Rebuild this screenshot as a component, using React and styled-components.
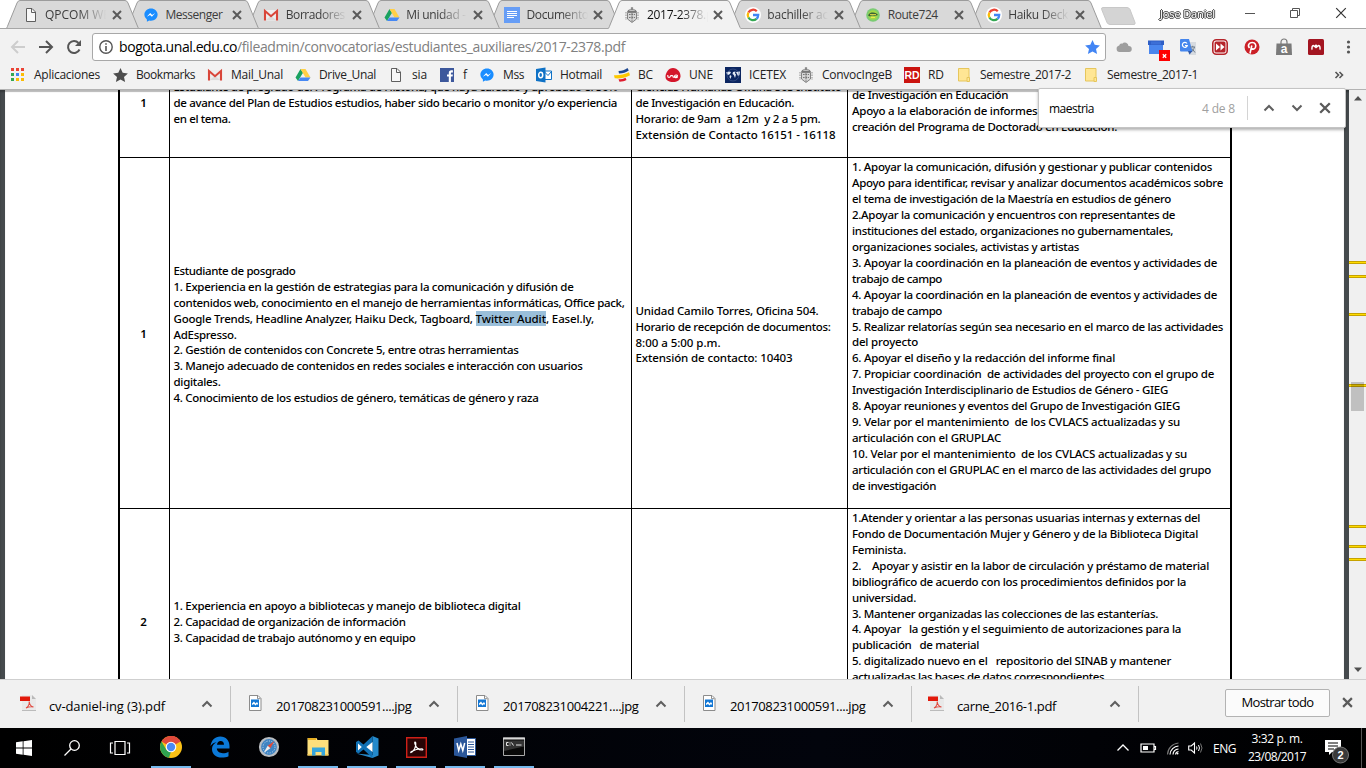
import React, { useLayoutEffect, useRef, useState } from "react";
import styled, { createGlobalStyle, css } from "styled-components";

const UI = `"Open Sans", "Noto Sans", sans-serif`;

const GlobalStyle = createGlobalStyle`
  * { box-sizing: border-box; }
  html, body { margin: 0; padding: 0; height: 100%; overflow: hidden; }
  body { font-family: ${UI}; font-size: 12px; color: #000; }
  svg { display: block; flex: none; overflow: visible; }
`;

/* ---------- text tracked to a measured width ---------- */

const FitText = styled.span`
  display: inline-block;
  white-space: pre;
  flex: none;
`;

function Fit({ w, children }) {
  const ref = useRef(null);
  const [tracking, setTracking] = useState(0);
  useLayoutEffect(() => {
    const el = ref.current;
    const natural = el.getBoundingClientRect().width;
    setTracking((w - natural) / el.textContent.length);
  }, [w]);
  return (
    <FitText ref={ref} style={{ letterSpacing: `${tracking}px` }}>
      {children}
    </FitText>
  );
}

/* ---------- icons ---------- */

const Icon = ({ size = 16, box = 16, children, ...rest }) => (
  <svg width={size} height={size} viewBox={`0 0 ${box} ${box}`} fill="none" {...rest}>
    {children}
  </svg>
);

const PageIcon = () => (
  <Icon>
    <path d="M3.500 1.500h5.500l3.500 3.500v9.500h-9z" fill="#f8f8f8" stroke="#5f5f5f" />
    <path d="M8.500 1.500v4h4" stroke="#5f5f5f" />
  </Icon>
);
const MessengerIcon = () => (
  <Icon>
    <path d="M8 1.500C4.300 1.500 1.400 4.200 1.400 7.600c0 2 1 3.700 2.500 4.800v2.400l2.300-1.300c.6.2 1.200.3 1.800.3 3.700 0 6.600-2.700 6.600-6.200S11.700 1.500 8 1.500z" fill="#1a8dff" />
    <path d="M3.800 9.700 7.200 6l1.900 1.900L12.200 6 8.900 9.700 7 7.900z" fill="#fff" />
  </Icon>
);
const GmailIcon = () => (
  <Icon>
    <path d="M1 3h14v10.500H1z" fill="#eee" />
    <path d="m3 13 5-4.500 5 4.500z" fill="#dcdcdc" />
    <path d="M2 13.500V4l6 5.200L14 4v9.500" stroke="#d9463a" strokeWidth="2.100" />
  </Icon>
);
const DriveIcon = () => (
  <Icon>
    <path d="M5.500 2 .5 10.500 3 14l5-8.300z" fill="#1aa260" />
    <path d="M5.500 2h5l5 8.500h-5z" fill="#ffcf48" />
    <path d="M5.400 10.500h10.100L13 14H3z" fill="#4688f4" />
  </Icon>
);
const DocsIcon = () => (
  <Icon>
    <path d="M0 0h16v16H0z" fill="#669df6" />
    <path d="M3 4.500h10M3 6.500h10M3 8.500h10M3 10.500h7" stroke="#fff" />
  </Icon>
);
const CrestIcon = () => (
  <Icon>
    <path d="M8 0v2.500M6.800 1.200h2.400" stroke="#777" />
    <path d="M3.500 4.500C4 2 12 2 12.500 4.500z" fill="#d0d0d0" stroke="#777" />
    <path d="M3.500 5.500h9v6.500L8 15.500l-4.500-3.500z" fill="#d6d6d6" stroke="#777" strokeWidth=".9" />
    <path d="M2 5v8M14 5v8" stroke="#8b8b8b" strokeDasharray="1.500 1" />
    <path d="M5 7.500h6M5 10.500h6M8 6v9" stroke="#777" strokeDasharray="1.600 .8" />
  </Icon>
);
const GoogleIcon = () => (
  <Icon>
    <circle cx="8" cy="8" r="8" fill="#fff" />
    <g strokeWidth="2.300">
      <path d="M11.800 4.300A5.200 5.200 0 0 0 3.400 5.600" stroke="#ea4335" />
      <path d="M3.400 5.600a5.200 5.200 0 0 0 0 4.900" stroke="#fbbc05" />
      <path d="M3.400 10.500a5.200 5.200 0 0 0 8.100 1.300" stroke="#34a853" />
      <path d="M8 8h5.200a5.200 5.200 0 0 1-1.700 3.800" stroke="#4285f4" />
    </g>
  </Icon>
);
const RouteIcon = () => (
  <Icon>
    <circle cx="8" cy="8" r="6.800" fill="#7ccc74" />
    <circle cx="8" cy="8" r="4.800" fill="#a2d947" />
    <path d="M3 8.500C4 6 6 5.500 8 5.500c2.500 0 4 1 5 2.500l-3 1-3-.5L5 9.500z" fill="#3b6338" />
    <path d="M5 7.700h6M6 10.500h4" stroke="#f2e84b" />
  </Icon>
);
const AppsIcon = () => (
  <Icon>
    {["#ea4335", "#ea4335", "#ea4335", "#34a853", "#4285f4", "#fbbc05", "#34a853", "#fbbc05", "#fbbc05"].map((c, i) => (
      <rect key={i} x={1 + (i % 3) * 5} y={1 + Math.floor(i / 3) * 5} width="3" height="3" fill={c} />
    ))}
  </Icon>
);
const StarIcon = ({ color = "#4d4d4d", size }) => (
  <Icon size={size}>
    <path d="m8.500 1 2.200 4.800 5.200.6-3.900 3.600 1.100 5.100-4.600-2.600-4.600 2.600L5 10 1.100 6.400l5.200-.6z" fill={color} />
  </Icon>
);
const FacebookIcon = () => (
  <Icon>
    <path d="M1 1h14v14H1z" fill="#3d589c" />
    <path d="M9.800 15V9.500H8V7.400h1.800V6c0-1.900 1-2.700 2.600-2.700h1.500v2.100h-1c-.8 0-1 .4-1 1v1h2l-.3 2.100h-1.700V15z" fill="#fff" />
  </Icon>
);
const GlyphText = styled.text`
  font-family: "Liberation Sans", sans-serif;
  font-weight: 700;
  font-size: ${(p) => p.$size || 10}px;
  fill: ${(p) => p.$fill || "#fff"};
`;
const OutlookIcon = () => (
  <Icon>
    <path d="M8 4h7.500v8.500H8z" fill="#fff" stroke="#0f72c6" />
    <path d="m8.500 5 3.500 3.500 3.500-4" stroke="#0f72c6" />
    <path d="M0 2 9.500.5v15L0 14z" fill="#0f72c6" />
    <ellipse cx="4.700" cy="8" rx="2" ry="2.700" stroke="#fff" strokeWidth="1.500" />
  </Icon>
);
const BancolombiaIcon = () => (
  <Icon>
    <path d="M4.500 4C8 4 11 3 13.500 1l1.300 2.500C12 5.500 9 6.500 5 6.500z" fill="#1d4790" />
    <path d="M0 8.200c5 .3 10.500-.7 15-3l1 3C11 11 6 11.700.7 11.300z" fill="#fdc800" />
    <path d="M4.500 12.300c3 0 5-.5 7-1.500l1 2.300c-2 1-4 1.700-7 1.700z" fill="#df1c2e" />
  </Icon>
);
const UneIcon = () => (
  <Icon>
    <path d="M8 1c4.500 0 7.800 4.500 7.500 8.500-.3 3.800-3.500 5.500-7.500 5.500S.7 13.500.5 10C.3 6 3.500 1 8 1z" fill="#d4162b" />
    <path d="M2.800 8v1.200c0 1.500 2.500 1.500 2.500 0 0-1 2.700-1 2.700 0v.5c0 1 2.500.3 4.500-.5 0-1.700-3-1.500-3 .3 0 1.300 2 1.500 3.200.6" stroke="#fff" strokeWidth="1.100" />
  </Icon>
);
const IcetexIcon = () => (
  <Icon>
    <path d="M0 0h16v16H0z" fill="#0b2560" />
    <path d="m1 5.500 3-1 2 .5-1 2-2 1-1-1zM5 8l1.500 1-1 3L4.500 10zM8 5l2.500-.5L10 6.500l1 1-1 3.500-1.200-3L7.500 7zM11 5l4-.5L14.500 8l-1.500 1-1-2z" fill="#e3e9f4" />
    <circle cx="8" cy="8" r="6" stroke="#5870a3" strokeWidth=".5" />
  </Icon>
);
const RdIcon = () => (
  <Icon>
    <path d="M0 0h16v16H0z" fill="#cb1410" />
    <GlyphText x=".5" y="11.700" $size={10.500}>RD</GlyphText>
  </Icon>
);
const FolderIcon = () => (
  <Icon>
    <path d="M2.500 1.500h10.500V14H2.500z" fill="#ffe694" stroke="#e6c65c" />
    <path d="M11 10.500h2.500v4h-2.500z" fill="#ffe694" stroke="#e6c65c" />
  </Icon>
);
const PdfIcon = () => (
  <Icon>
    <path d="M2 0h10l4 4v12H2z" fill="#e9e9e9" />
    <path d="M12 0v4h4z" fill="#b9b9b9" />
    <path d="M2 15.500h14" stroke="#bbb" />
    <path d="M0 1.500h10V6H0z" fill="#e2190b" />
    <path d="M6 13c2-1 3.500-4 3.200-6.500C9.500 9.500 11 11.500 13.500 12c-3-.5-5.500 0-7.500 1" stroke="#e0483e" strokeWidth="1.100" />
  </Icon>
);
const JpgIcon = () => (
  <Icon>
    <path d="M2.500.5h8.500l3 3v12H2.500z" fill="#fff" stroke="#8c8c8c" />
    <path d="M10.500.7v3h3" stroke="#8c8c8c" />
    <path d="M4 4.500h8v7.500H4z" fill="#1377d4" />
    <path d="m5 8.500 2-2 1.500 2L10 7l1 1.500V10l-1-1-1.500 1.500L7 9l-2 1z" fill="#fff" />
  </Icon>
);
const Chevron = ({ down, color = "#5f5f5f", size = 12 }) => (
  <Icon size={size} box={12}>
    <path d={down ? "m1.500 3.500 4.500 4.500 4.500-4.500" : "M1.500 8.500 6 4l4.500 4.500"} stroke={color} strokeWidth="2" />
  </Icon>
);
const Cross = ({ size = 10, color = "#5a5a5a", weight = 2 }) => (
  <Icon size={size} box={10}>
    <path d="m1 1 8 8M9 1 1 9" stroke={color} strokeWidth={weight} />
  </Icon>
);

/* ---------- window shell ---------- */

const Window = styled.div`
  width: 1366px;
  height: 768px;
  display: flex;
  flex-direction: column;
  overflow: hidden;
  position: relative;
  background: #f2f2f2;
`;

const TabStrip = styled.div`
  height: 29px;
  padding-left: 6px;
  display: flex;
  background: #fff;
  border-bottom: 1px solid #a6a6a6;
  flex: none;
`;

const TabBox = styled.div`
  position: relative;
  z-index: ${(p) => p.$layer};
  width: 120.400px;
  height: 29px;
  display: flex;
  align-items: center;
  padding-left: 16.500px;
  flex: none;
  color: ${(p) => (p.$active ? "#111" : "#3c3c3c")};
`;

const TabShape = styled.svg`
  position: absolute;
  left: 0;
  top: 0;
`;

const TabLabel = styled.span`
  position: relative;
  width: 61px;
  margin-left: 6.500px;
  overflow: hidden;
  white-space: nowrap;
  line-height: 29px;
  ${(p) => p.$fade && css`mask-image: linear-gradient(90deg, #000 55%, transparent 100%);`}
`;

const Over = styled.span`
  position: relative;
  display: flex;
  margin-left: ${(p) => p.$gap || 0}px;
`;

const NewTab = styled.svg`
  margin: 7px 0 0 11px;
`;

const ProfileName = styled.span`
  margin-left: 25px;
  line-height: 27px;
  font-size: 11px;
  color: #fff;
  text-shadow: 1px 0 #444, -1px 0 #444, 0 1px #444, 0 -1px #444;
  will-change: transform;
`;

const WindowButtons = styled.div`
  display: flex;
  align-items: center;
  gap: 35px;
  height: 26px;
  margin-left: 30px;
`;

const TABS = [
  { icon: <PageIcon />, label: "QPCOM WE", w: 65, fade: true },
  { icon: <MessengerIcon />, label: "Messenger", w: 57 },
  { icon: <GmailIcon />, label: "Borradores", w: 59, fade: true },
  { icon: <DriveIcon />, label: "Mi unidad - G", w: 71, fade: true },
  { icon: <DocsIcon />, label: "Documento", w: 62, fade: true },
  { icon: <CrestIcon />, label: "2017-2378.p", w: 66, fade: true, active: true },
  { icon: <GoogleIcon />, label: "bachiller aca", w: 67, fade: true },
  { icon: <RouteIcon />, label: "Route724", w: 50 },
  { icon: <GoogleIcon />, label: "Haiku Deck", w: 60, fade: true },
];

function Tab({ tab, layer }) {
  return (
    <TabBox $layer={layer} $active={tab.active}>
      <TabShape width="133" height="29" viewBox="0 0 133 29">
        <path d="M0 29C1 28 1 27.500 2 25L11 3Q12 .5 14 .5H119Q121 .5 122 3L131 25Q132 28 133 29z" fill={tab.active ? "#f2f2f2" : "#d9d9d9"} />
        <path d="M0 28.500C1 28 1 27.500 2 25L11 3Q12 .5 14 .5H119Q121 .5 122 3L131 25Q132 28 133 28.500" fill="none" stroke="#9c9c9c" />
        {!tab.active && <path d="M0 28.500h133" stroke="#a6a6a6" />}
      </TabShape>
      <Over>{tab.icon}</Over>
      <TabLabel $fade={tab.fade}>
        <Fit w={tab.w}>{tab.label}</Fit>
      </TabLabel>
      <Over $gap={5.500}>
        <Cross />
      </Over>
    </TabBox>
  );
}

const Toolbar = styled.div`
  height: 36px;
  flex: none;
  display: flex;
  align-items: center;
`;

const NavButtons = styled.div`
  display: flex;
  gap: 12px;
  padding-left: 10px;
  width: 92px;
`;

const Omnibox = styled.div`
  width: 1014px;
  height: 28px;
  display: flex;
  align-items: center;
  gap: 6px;
  padding: 0 5px 0 6px;
  background: #fff;
  border: 1px solid #a8a8a8;
  border-radius: 3px;
  font-size: 14px;
`;

const Url = styled.div`
  display: flex;
  flex: 1;
  line-height: 24px;
`;
const UrlPath = styled.span`
  color: #808080;
`;

const Extensions = styled.div`
  display: flex;
  align-items: center;
  gap: 16px;
  margin-left: 10px;
`;

const BookmarkBar = styled.div`
  height: 25px;
  flex: none;
  display: flex;
  align-items: center;
  padding: 0 22px 5px 10px;
  gap: 12px;
  border-bottom: 1px solid #b3b3b3;
`;

const BookmarkItem = styled.div`
  display: flex;
  align-items: center;
  gap: 8px;
  line-height: 18px;
  color: #222;
`;

const MoreBookmarks = styled.div`
  margin-left: auto;
`;

const BOOKMARKS = [
  [<AppsIcon />, "Aplicaciones", 66],
  [<StarIcon />, "Bookmarks", 59],
  [<GmailIcon />, "Mail_Unal", 52],
  [<DriveIcon />, "Drive_Unal", 57],
  [<PageIcon />, "sia", 15],
  [<FacebookIcon />, "f", 4],
  [<MessengerIcon />, "Mss", 21],
  [<OutlookIcon />, "Hotmail", 42],
  [<BancolombiaIcon />, "BC", 15],
  [<UneIcon />, "UNE", 24],
  [<IcetexIcon />, "ICETEX", 37],
  [<CrestIcon />, "ConvocIngeB", 70],
  [<RdIcon />, "RD", 16],
  [<FolderIcon />, "Semestre_2017-2", 91],
  [<FolderIcon />, "Semestre_2017-1", 91],
];

/* ---------- find bar ---------- */

const FindBar = styled.div`
  position: absolute;
  z-index: 20;
  left: 1038px;
  top: 88px;
  width: 308px;
  height: 40px;
  display: flex;
  align-items: center;
  background: #fff;
  border: 1px solid #c4c4c4;
  border-radius: 2px;
  box-shadow: 0 2px 3px rgba(0, 0, 0, 0.3);
  padding: 0 14px 0 10px;
`;
const FindCount = styled.span`
  margin-left: auto;
  color: #a0a0a0;
`;
const FindRule = styled.span`
  width: 1px;
  height: 24px;
  margin: 0 15px 0 12px;
  background: #d4d4d4;
`;
const FindActions = styled.div`
  display: flex;
  align-items: center;
  gap: 16px;
`;

/* ---------- document ---------- */

const Viewer = styled.div`
  height: 589px;
  flex: none;
  display: flex;
  overflow: hidden;
  background: #454a4d;
  box-shadow: inset 0 2px 2px rgba(0, 0, 0, 0.25);
`;

const Page = styled.div`
  width: 1339px;
  height: 589px;
  margin: 0 5px;
  padding-left: 113px;
  background: #fff;
  overflow: hidden;
  flex: none;
  box-shadow: inset 0 2px 1px rgba(0, 0, 0, 0.28);
`;

const Table = styled.div`
  width: 1114px;
  border: solid #000;
  border-width: 0 2px;
`;

const Row = styled.div`
  display: grid;
  grid-template-columns: 50px 462px 216px 1fr;
  height: ${(p) => p.$h}px;
  border-bottom: 1px solid #000;
`;

const Cell = styled.div`
  display: flex;
  flex-direction: column;
  justify-content: ${(p) => p.$align || "center"};
  align-items: ${(p) => (p.$centered ? "center" : "flex-start")};
  padding: ${(p) => p.$pad || "0"};
  padding-left: ${(p) => (p.$centered ? 0 : 3.500)}px;
  padding-right: ${(p) => (p.$centered ? 2 : 0)}px;
  border-right: 1px solid #000;
  overflow: hidden;
  &:last-child { border-right: 0; padding-left: 4px; }
`;

const Line = styled.div`
  font: ${(p) => (p.$strong ? 600 : 500)} 11.500px/15.930px "Noto Sans", "Open Sans", sans-serif;
  height: 15.930px;
  flex: none;
  white-space: pre;
`;

const Mark = styled.mark`
  background: #9abfda;
  color: inherit;
`;

const Lines = ({ items }) => items.map((parts, i) => (
  <Line key={i}>
    {Array.isArray(parts[0])
      ? parts.map(([text, w, marked], k) => {
          const run = <Fit key={k} w={w}>{text}</Fit>;
          return marked ? <Mark key={k}>{run}</Mark> : run;
        })
      : <Fit w={parts[1]}>{parts[0]}</Fit>}
  </Line>
));

const ROWS = [
  {
    h: 68, n: "1", align: "flex-end", pads: ["0 0 46px", "0 0 30px", "0 0 14px", "0 0 22px"],
    cells: [
      [["Estudiante de pregrado del Programa de Historia, que haya cursado y aprobado el 50%", 444], ["de avance del Plan de Estudios estudios, haber sido becario o monitor y/o experiencia", 443.5], ["en el tema.", 57]],
      [["Ciencias Humanas Oficina 503 Instituto", 206], ["de Investigación en Educación.", 158.5], ["Horario: de 9am  a 12m  y 2 a 5 pm.", 185], ["Extensión de Contacto 16151 - 16118", 200]],
      [["de Investigación en Educación", 156], ["Apoyo a la elaboración de informes para la", 224], ["creación del Programa de Doctorado en Educación.", 265]],
    ],
  },
  {
    h: 351, n: "1", pads: ["2px 0 0", "3px 0 0", "3px 0 0", "0 0 13px"],
    cells: [
      [
        ["Estudiante de posgrado", 122],
        ["1. Experiencia en la gestión de estrategias para la comunicación y difusión de", 400],
        ["contenidos web, conocimiento en el manejo de herramientas informáticas, Office pack,", 451],
        [["Google Trends, Headline Analyzer, Haiku Deck, Tagboard, ", 302], ["Twitter Audit", 70.5, true], [", Easel.ly,", 48]],
        ["AdEspresso.", 63],
        ["2. Gestión de contenidos con Concrete 5, entre otras herramientas", 345],
        ["3. Manejo adecuado de contenidos en redes sociales e interacción con usuarios", 409],
        ["digitales.", 47],
        ["4. Conocimiento de los estudios de género, temáticas de género y raza", 365],
      ],
      [["Unidad Camilo Torres, Oficina 504.", 183], ["Horario de recepción de documentos:", 195], ["8:00 a 5:00 p.m.", 85], ["Extensión de contacto: 10403", 157]],
      [
        ["1. Apoyar la comunicación, difusión y gestionar y publicar contenidos", 360],
        ["Apoyo para identificar, revisar y analizar documentos académicos sobre", 371],
        ["el tema de investigación de la Maestría en estudios de género", 319],
        ["2.Apoyar la comunicación y encuentros con representantes de", 323],
        ["instituciones del estado, organizaciones no gubernamentales,", 321],
        ["organizaciones sociales, activistas y artistas", 227],
        ["3. Apoyar la coordinación en la planeación de eventos y actividades de", 365],
        ["trabajo de campo", 90],
        ["4. Apoyar la coordinación en la planeación de eventos y actividades de", 365],
        ["trabajo de campo", 90],
        ["5. Realizar relatorías según sea necesario en el marco de las actividades", 371],
        ["del proyecto", 66],
        ["6. Apoyar el diseño y la redacción del informe final", 263],
        ["7. Propiciar coordinación  de actividades del proyecto con el grupo de", 362],
        ["Investigación Interdisciplinario de Estudios de Género - GIEG", 316],
        ["8. Apoyar reuniones y eventos del Grupo de Investigación GIEG", 328],
        ["9. Velar por el mantenimiento  de los CVLACS actualizadas y su", 328],
        ["articulación con el GRUPLAC", 149],
        ["10. Velar por el mantenimiento  de los CVLACS actualizadas y su", 335],
        ["articulación con el GRUPLAC en el marco de las actividades del grupo", 359],
        ["de investigación", 84],
      ],
    ],
  },
  {
    h: 228, n: "2", pads: ["0 0 1px", "0 0 1.5px", "0", "1px 0 0"], lastTop: true,
    cells: [
      [["1. Experiencia en apoyo a bibliotecas y manejo de biblioteca digital", 347], ["2. Capacidad de organización de información", 232], ["3. Capacidad de trabajo autónomo y en equipo", 242]],
      [],
      [
        ["1.Atender y orientar a las personas usuarias internas y externas del", 348],
        ["Fondo de Documentación Mujer y Género y de la Biblioteca Digital", 346],
        ["Feminista.", 54],
        ["2.    Apoyar y asistir en la labor de circulación y préstamo de material", 357],
        ["bibliográfico de acuerdo con los procedimientos definidos por la", 334],
        ["universidad.", 64],
        ["3. Mantener organizadas las colecciones de las estanterías.", 306],
        ["4. Apoyar   la gestión y el seguimiento de autorizaciones para la", 329],
        ["publicación   de material", 127],
        ["5. digitalizado nuevo en el   repositorio del SINAB y mantener", 319],
        ["actualizadas las bases de datos correspondientes.", 255],
      ],
    ],
  },
];

const ScrollTrack = styled.div`
  position: relative;
  width: 17px;
  height: 589px;
  background: #f0f0f0;
  flex: none;
  display: flex;
  flex-direction: column;
  justify-content: space-between;
  align-items: center;
  padding: 5px 0 6px;
`;
const Hit = styled.span`
  position: absolute;
  left: 0;
  top: ${(p) => p.$y - 90}px;
  width: 17px;
  height: 3px;
  background: #ffdc00;
  border: solid #c6a200;
  border-width: 1px 0;
`;
const Thumb = styled.span`
  position: absolute;
  left: 2px;
  top: 292px;
  width: 13px;
  height: 29px;
  background: rgba(0, 0, 0, 0.2);
`;

/* ---------- downloads ---------- */

const Shelf = styled.div`
  height: 49px;
  flex: none;
  display: flex;
  align-items: center;
  padding-left: 4px;
  background: #f1f1f1;
  border-top: 1px solid #cfcfcf;
`;
const Download = styled.div`
  width: 227px;
  height: 36px;
  display: flex;
  align-items: center;
  padding: 0 17px 0 16px;
  border-right: 1px solid #c3c3c3;
  font-size: 13px;
`;
const DownloadName = styled.span`
  margin: 3px auto 0 13px;
`;
const FileIcon = styled.span`
  margin-top: -2px;
`;
const ShowAll = styled.button`
  width: 105px;
  height: 28px;
  margin: -3px 13px 0 86px;
  padding: 0 0 2px;
  font: 13px ${UI};
  color: #000;
  background: #fbfbfb;
  border: 1px solid #b3b3b3;
  border-radius: 2px;
`;
const CloseShelf = styled.div`
  margin: -3px 0 0 -1px;
`;

const DOWNLOADS = [
  [<PdfIcon />, "cv-daniel-ing (3).pdf", 116],
  [<JpgIcon />, "201708231000591....jpg", 135.5],
  [<JpgIcon />, "201708231004221....jpg", 135.5],
  [<JpgIcon />, "201708231000591....jpg", 135.5],
  [<PdfIcon />, "carne_2016-1.pdf", 99],
];

/* ---------- taskbar ---------- */

const Taskbar = styled.div`
  height: 40px;
  flex: none;
  display: flex;
  background: linear-gradient(90deg, #000, #02040c 60%, #000);
  color: #fff;
`;
const SystemButton = styled.div`
  width: 48px;
  display: grid;
  place-items: center;
`;
const AppGroup = styled.div`
  display: flex;
  gap: 9px;
  padding-left: 7px;
`;
const AppButton = styled.div`
  width: 40px;
  display: grid;
  place-items: center;
  border-bottom: 2px solid ${(p) => (p.$open ? "#76b9ed" : "transparent")};
`;
const Tray = styled.div`
  margin-left: auto;
  display: flex;
  align-items: center;
`;
const TrayItem = styled.div`
  margin-right: ${(p) => p.$gap}px;
`;
const Clock = styled.div`
  width: 60px;
  display: flex;
  flex-direction: column;
  align-items: center;
  line-height: 18px;
  margin: 0 18px 0 11px;
`;
const Desktop = styled.div`
  width: 5px;
  height: 40px;
  border-left: 1px solid #555;
  margin-left: 12px;
`;

const ChromeIcon = () => (
  <Icon size={22} box={22}>
    <circle cx="11" cy="11" r="11" fill="#fbc116" />
    <path d="M11 11 1.500 5.500A11 11 0 0 1 20.500 5.500z" fill="#e04a3c" />
    <path d="M11 0a11 11 0 0 1 9.600 5.700H11z" fill="#e04a3c" />
    <path d="M1.500 5.500 6.500 14 11 15.500 9 21.800A11 11 0 0 1 1.500 5.500z" fill="#2fa24f" />
    <circle cx="11" cy="11" r="5.300" fill="#fff" />
    <circle cx="11" cy="11" r="4.200" fill="#4a8af4" />
  </Icon>
);
const EdgeIcon = () => (
  <Icon size={22} box={22}>
    <path d="M1.500 10C2.500 4 6 .5 11.200.5c5.800 0 9.300 4.200 9.300 9.500v2.600H7.800c.2 3.200 3 4.600 6 4.600 2.200 0 4-.5 5.700-1.500v4.500c-1.900 1-4.200 1.400-6.600 1.400-6 0-9.900-3.400-9.900-8.700 0-3 1.700-5.400 4.500-6.700-3 .5-4.700 1.900-6 3.800zM8 8.700h7c0-2.300-1.200-3.700-3.500-3.700C9.700 5 8.400 6.300 8 8.700z" fill="#0b79d8" />
  </Icon>
);
const SafariIcon = () => (
  <Icon size={20} box={20}>
    <circle cx="10" cy="10" r="9" fill="#3f84c2" stroke="#b9bdc1" strokeWidth="2.200" />
    <circle cx="10" cy="10" r="6" stroke="#c8dcee" strokeDasharray="1 1.500" />
    <path d="m15.500 4-4.200 7.300-2.600-2.600z" fill="#e34b39" />
    <path d="m4.500 16 4.200-7.300 2.600 2.600z" fill="#eee" />
  </Icon>
);
const ExplorerIcon = () => (
  <Icon size={22} box={22}>
    <path d="M.5 2h9l1 2h11v15.500H.5z" fill="#fddf7c" />
    <path d="M1 2h8v2H1z" fill="#e7ae22" />
    <path d="M5 11.500h13v8h-3.500V16H8.500v3.500H5z" fill="#36a6dc" />
    <path d="M.5 19.500H5v-1.500H.5zM18 18h3.500v1.500H18z" fill="#f5cc5a" />
  </Icon>
);
const CodeIcon = () => (
  <Icon size={24} box={24}>
    <path d="m17.500 1 6 2.500v17l-6 2.500L1 18.500 17.500 20z" fill="#2489ca" />
    <path d="M1 7l2.500-1.500 5 4 9-8.500v22L8.500 14.500l-5 4L1 17z" fill="#1071b5" />
    <path d="M3 8.500v7L6.800 12zM17.500 7v10l-6.200-5z" fill="#fff" />
  </Icon>
);
const AcrobatIcon = () => (
  <Icon size={21} box={21}>
    <path d="M.7.7h19.600v19.600H.7z" fill="#280405" stroke="#cf2018" strokeWidth="1.400" />
    <path d="M5 15.500c2.500-1 5.500-6 4.800-9.500-.4-1.600-1.500-1-1 .5.800 3 3 6.500 7.200 6.500 1.500 0 1.200-1.300-.5-1.300-3.500 0-7.500 1.300-10 2.800-1 .7-1 1.300-.5 1z" stroke="#fff" strokeWidth="1.100" />
  </Icon>
);
const WordIcon = () => (
  <Icon size={22} box={22}>
    <path d="M12 2.500h9.500v17H12z" fill="#fff" stroke="#2b579a" />
    <path d="M14 6h6M14 8.500h6M14 11h6M14 13.500h6M14 16h6" stroke="#2b579a" />
    <path d="M0 2.500 13 0v22L0 19.500z" fill="#2b579a" />
    <path d="m3 7 1.700 7.500L6.800 8l2 6.500L10.700 7" stroke="#fff" strokeWidth="1.500" />
  </Icon>
);
const TerminalIcon = () => (
  <Icon size={22} box={22}>
    <path d="M.5 2h21v17.500H.5z" fill="#080808" stroke="#a9a9a9" />
    <path d="M0 1.500h22v2H0z" fill="#d8d8d8" />
    <path d="M1 4.500h20v6L1 15z" fill="#333" />
    <path d="M5.500 6.500h-2v3h2M7 6.500v1M7 8.500v1M8.500 6.500l2 3M13 9h5.500" stroke="#e5e5e5" />
  </Icon>
);

export default function App() {
  return (
    <>
      <GlobalStyle />
      <Window>
        <TabStrip>
          {TABS.map((tab, i) => (
            <Tab key={i} tab={tab} layer={tab.active ? 15 : 10 - i} />
          ))}
          <NewTab width="34" height="18" viewBox="0 0 34 18">
            <path d="M2 .5h24q2 0 3 2l5 13q.5 2-1 2H9q-2 0-3-2L.7 2.500Q0 .5 2 .5z" fill="#d4d4d4" stroke="#c8c8c8" />
          </NewTab>
          <ProfileName><Fit w={55}>Jose Daniel</Fit></ProfileName>
          <WindowButtons>
            <Icon size={10} box={10}><path d="M0 5.500h10" stroke="#555" /></Icon>
            <Icon size={10} box={10}><path d="M.5 2.500h7v7h-7zM2.500 2.500v-2h7v7h-2" stroke="#555" /></Icon>
            <Cross size={12} weight={1} color="#333" />
          </WindowButtons>
        </TabStrip>

        <Toolbar>
          <NavButtons>
            <Icon><path d="M15 8H2.500M8 2 2 8l6 6" stroke="#cdcdcd" strokeWidth="2" /></Icon>
            <Icon><path d="M1 8h12.500M8 2l6 6-6 6" stroke="#555" strokeWidth="2" /></Icon>
            <Icon><path d="M13.500 10.500A6 6 0 1 1 12.500 4" stroke="#555" strokeWidth="2" /><path d="M15 1v6H9z" fill="#555" /></Icon>
          </NavButtons>
          <Omnibox>
            <Icon size={14} box={14}>
              <circle cx="7" cy="7" r="6.200" stroke="#555" strokeWidth="1.400" />
              <path d="M7 3.200v1.600M7 6v5" stroke="#555" strokeWidth="1.600" />
            </Icon>
            <Url>
              <Fit w={118}>bogota.unal.edu.co</Fit>
              <UrlPath><Fit w={388}>/fileadmin/convocatorias/estudiantes_auxiliares/2017-2378.pdf</Fit></UrlPath>
            </Url>
            <StarIcon color="#4285f4" />
          </Omnibox>
          <Extensions>
            <Icon><path d="M3.500 13a3.300 3.300 0 0 1-.3-6.500 2.500 2.500 0 0 1 3-1.800A3.700 3.700 0 0 1 12.500 7 3 3 0 0 1 13 13z" fill="#9e9e9e" /></Icon>
            <Icon>
              <path d="M1 3h14v12H1z" fill="#4a86ee" /><path d="M0 1.500h16V6H0z" fill="#2f5fc6" /><path d="M3 2.500h10v3H3z" fill="#3d6fd6" />
              <path d="M11 11h11v11H11z" fill="#f00" />
              <path d="m14.800 15.300 3.400 3.400M18.200 15.300l-3.400 3.400" stroke="#fff" strokeWidth="1.300" />
            </Icon>
            <Icon>
              <path d="M6 3h10v13H9z" fill="#d7dbe0" /><path d="M1 0h8l3.500 12.500H1q-1 0-1-1V1q0-1 1-1z" fill="#4586ed" />
              <path d="M7 4.500A2.500 2.500 0 1 0 7.300 6.500H5" stroke="#fff" strokeWidth="1.200" />
              <path d="M10.500 8H15M12.700 6.800V8M14.500 8c-.5 2-1.500 3-3 4.500M12 9.500l3 4" stroke="#6f7d8a" /><path d="M8 12h4.500L9.500 15.500z" fill="#3059a8" />
            </Icon>
            <Icon>
              <rect x=".8" y=".8" width="14.400" height="14.400" rx="3.500" fill="#fff" stroke="#b5252b" strokeWidth="1.600" />
              <rect x="2.500" y="2.500" width="11" height="11" rx="1.500" fill="#b5252b" /><path d="M4 4.500 8 8l-4 3.500zM8.500 4.500l4 3.500-4 3.500z" fill="#fff" />
            </Icon>
            <Icon>
              <circle cx="8" cy="8" r="7.500" fill="#cb2027" />
              <path d="m6 14.500 1.800-8M5.500 9C3 6 5.500 3.500 8.200 3.500c3 0 4.300 2.500 3.200 5-1 2-3.200 2-4 .8" stroke="#fff" strokeWidth="1.600" />
            </Icon>
            <Icon>
              <path d="M.5 4.500h15l.5 11.500H0z" fill="#7a7a7a" /><path d="M5 6V3a3 3 0 0 1 6 0v3" stroke="#7a7a7a" strokeWidth="1.200" />
              <GlyphText x="4.700" y="13.500" $size={12}>a</GlyphText>
            </Icon>
            <Icon>
              <rect width="16" height="16" rx="1.500" fill="#a31521" />
              <path d="M3.500 10.500c1-.5 0-2.500 1-3.500s2 0 3.500 1.500C9.500 7 10.500 6 11.500 7s0 3 1 3.500" stroke="#fff" strokeWidth="1.500" />
              <circle cx="8" cy="6.800" r="1.200" fill="#fff" />
            </Icon>
            <Icon><circle cx="8.500" cy="3" r="1.600" fill="#555" /><circle cx="8.500" cy="8" r="1.600" fill="#555" /><circle cx="8.500" cy="13" r="1.600" fill="#555" /></Icon>
          </Extensions>
        </Toolbar>

        <BookmarkBar>
          {BOOKMARKS.map(([icon, label, w], i) => (
            <BookmarkItem key={i}>{icon}<Fit w={w}>{label}</Fit></BookmarkItem>
          ))}
          <MoreBookmarks>
            <Icon size={10} box={10}><path d="m1.500 2 3 3-3 3M5.500 2l3 3-3 3" stroke="#555" strokeWidth="1.600" /></Icon>
          </MoreBookmarks>
        </BookmarkBar>

        <FindBar>
          <Fit w={45}>maestria</Fit>
          <FindCount><Fit w={33}>4 de 8</Fit></FindCount>
          <FindRule />
          <FindActions><Chevron /><Chevron down /><Cross size={12} weight={1.900} /></FindActions>
        </FindBar>

        <Viewer>
          <Page>
            <Table>
              {ROWS.map((row, r) => (
                <Row key={r} $h={row.h}>
                  <Cell $centered $align={row.align} $pad={row.pads[0]}><Line $strong>{row.n}</Line></Cell>
                  {row.cells.map((items, c) => (
                    <Cell key={c} $align={row.lastTop && c === 2 ? "flex-start" : row.align} $pad={row.pads[c + 1]}>
                      <Lines items={items} />
                    </Cell>
                  ))}
                </Row>
              ))}
            </Table>
          </Page>
          <ScrollTrack>
            <Icon size={8} box={8}><path d="M0 5.500h8L4 1z" fill="#505050" /></Icon>
            {[261, 275, 313, 384, 525, 545, 558].map((y) => <Hit key={y} $y={y} />)}
            <Thumb />
            <Icon size={8} box={8}><path d="M0 2.500h8L4 7z" fill="#505050" /></Icon>
          </ScrollTrack>
        </Viewer>

        <Shelf>
          {DOWNLOADS.map(([icon, name, w], i) => (
            <Download key={i}>
              <FileIcon>{icon}</FileIcon>
              <DownloadName><Fit w={w}>{name}</Fit></DownloadName>
              <Chevron />
            </Download>
          ))}
          <ShowAll><Fit w={72}>Mostrar todo</Fit></ShowAll>
          <CloseShelf><Cross size={11} /></CloseShelf>
        </Shelf>

        <Taskbar>
          <SystemButton>
            <Icon><path d="M0 2.300 6.700 1.300v6.300H0zM7.500 1.200 16 0v7.600H7.500zM0 8.400h6.700v6.300L0 13.700zM7.500 8.400H16V16l-8.500-1.200z" fill="#fff" /></Icon>
          </SystemButton>
          <SystemButton>
            <Icon><circle cx="10.500" cy="5.500" r="4.800" stroke="#fff" strokeWidth="1.300" /><path d="M7 9 .5 15.500" stroke="#fff" strokeWidth="1.300" /></Icon>
          </SystemButton>
          <SystemButton>
            <Icon size={20} box={20}><path d="M5 3.500h10v13H5zM3 5H.500v10H3M17 5h2.500v10H17" stroke="#fff" strokeWidth="1.200" /></Icon>
          </SystemButton>
          <AppGroup>
            <AppButton $open><ChromeIcon /></AppButton>
            <AppButton><EdgeIcon /></AppButton>
            <AppButton><SafariIcon /></AppButton>
            <AppButton $open><ExplorerIcon /></AppButton>
            <AppButton $open><CodeIcon /></AppButton>
            <AppButton $open><AcrobatIcon /></AppButton>
            <AppButton $open><WordIcon /></AppButton>
            <AppButton $open><TerminalIcon /></AppButton>
          </AppGroup>
          <Tray>
            <TrayItem $gap={11}>
              <Icon size={12} box={12}><path d="M.5 8.500 6 3l5.500 5.500" stroke="#fff" strokeWidth="1.300" /></Icon>
            </TrayItem>
            <TrayItem $gap={10}>
              <Icon><path d="M1 4h13v8H1zM14 6.500h1.500v3H14" stroke="#fff" strokeWidth="1.200" /><path d="M3 6h5v4H3z" fill="#fff" /></Icon>
            </TrayItem>
            <TrayItem $gap={6}>
              <Icon>
                <path d="M1.500 14.500A12 12 0 0 1 12.500 3" stroke="#777" strokeWidth="1.200" />
                <path d="M4 14.500A9 9 0 0 1 12.500 6M7 14.500A6 6 0 0 1 12.500 9M9.500 14.500A3.500 3.500 0 0 1 12.500 11.500" stroke="#fff" strokeWidth="1.200" />
                <circle cx="11.500" cy="13.500" r="1" fill="#fff" />
              </Icon>
            </TrayItem>
            <TrayItem $gap={9}>
              <Icon>
                <path d="M.7 6h2.500L6.500 3v10L3.200 10H.7z" stroke="#fff" strokeWidth="1.100" />
                <path d="M8.500 6.500q1 1.500 0 3M10.500 5q2 3 0 6" stroke="#fff" /><path d="M12.500 3.500q3 4.500 0 9" stroke="#777" />
              </Icon>
            </TrayItem>
            <Fit w={23}>ENG</Fit>
            <Clock>
              <Fit w={51}>3:32 p. m.</Fit>
              <Fit w={58}>23/08/2017</Fit>
            </Clock>
            <Icon size={24} box={24}>
              <path d="M0 4h16v12H7l-3 3v-3H0z" fill="#fff" /><path d="M3 7h10M3 10h10M3 13h6" stroke="#000" />
              <circle cx="15.500" cy="19" r="8" fill="#3a3a3a" stroke="#777" />
              <GlyphText x="12.500" y="23" $size={11}>2</GlyphText>
            </Icon>
            <Desktop />
          </Tray>
        </Taskbar>
      </Window>
    </>
  );
}
